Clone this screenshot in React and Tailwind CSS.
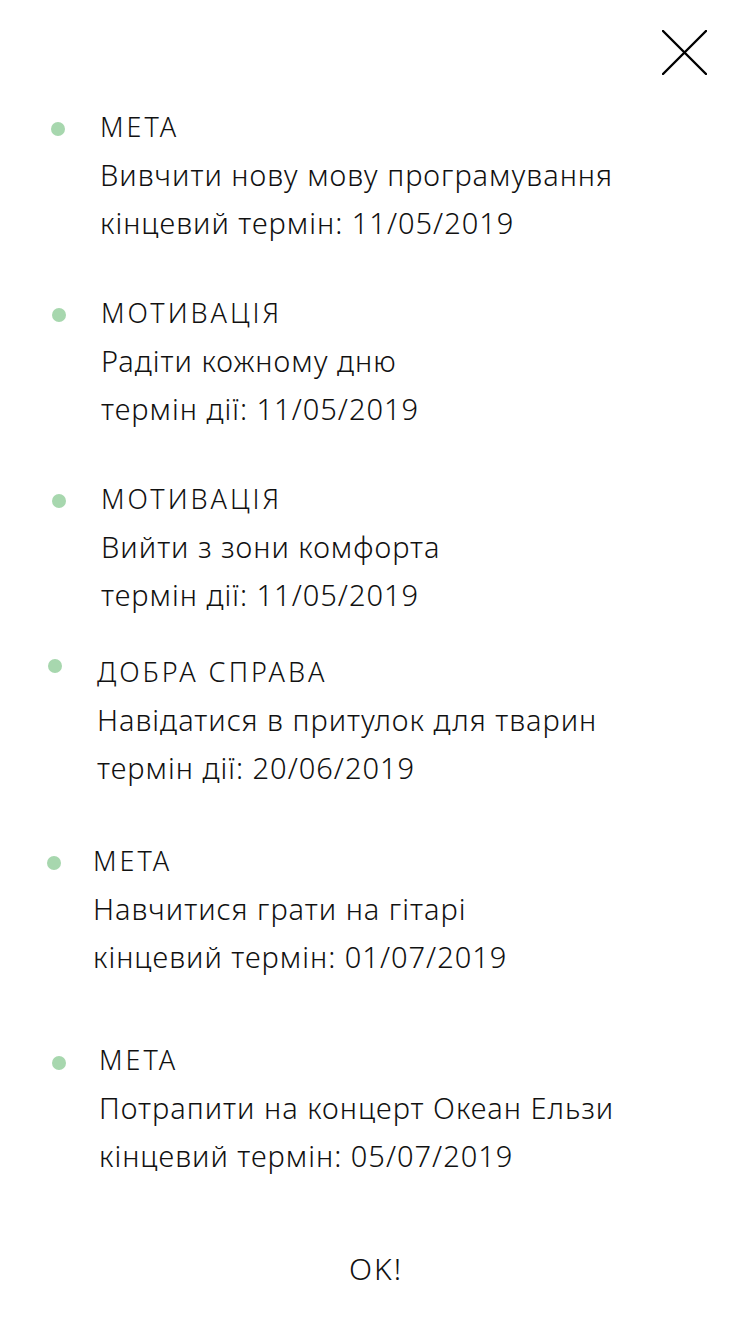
const goals = [
  {
    title: "МЕТА",
    text: "Вивчити нову мову програмування",
    date: "кінцевий термін: 11/05/2019",
    wrap: "mt-[28px] pl-[51px]",
    dot: "mt-[19px]",
    gap: "ml-[35px]",
  },
  {
    title: "МОТИВАЦІЯ",
    text: "Радіти кожному дню",
    date: "термін дії: 11/05/2019",
    wrap: "mt-[42px] pl-[52px]",
    dot: "mt-[19px]",
    gap: "ml-[35px]",
  },
  {
    title: "МОТИВАЦІЯ",
    text: "Вийти з зони комфорта",
    date: "термін дії: 11/05/2019",
    wrap: "mt-[42px] pl-[52px]",
    dot: "mt-[19px]",
    gap: "ml-[35px]",
  },
  {
    title: "ДОБРА СПРАВА",
    text: "Навідатися в притулок для тварин",
    date: "термін дії: 20/06/2019",
    wrap: "mt-[29px] pl-[48px]",
    dot: "mt-[11px]",
    gap: "ml-[35px]",
  },
  {
    title: "МЕТА",
    text: "Навчитися грати на гітарі",
    date: "кінцевий термін: 01/07/2019",
    wrap: "mt-[45px] pl-[47px]",
    dot: "mt-[19px]",
    gap: "ml-[32px]",
  },
  {
    title: "МЕТА",
    text: "Потрапити на концерт Океан Ельзи",
    date: "кінцевий термін: 05/07/2019",
    wrap: "mt-[55px] pl-[52px]",
    dot: "mt-[20px]",
    gap: "ml-[33px]",
  },
];

function CloseIcon() {
  return (
    <svg width="45" height="45" viewBox="0 0 45 45" fill="none">
      <path
        d="M1 1L44 44M44 1L1 44"
        stroke="#000"
        strokeWidth="2.4"
        strokeLinecap="round"
      />
    </svg>
  );
}

export default function App() {
  return (
    <div className="min-h-[1330px] w-[750px] bg-white text-[#111] font-['Noto_Sans',sans-serif] font-light">
      <div className="flex justify-end pt-[30px] pr-[43px]">
        <button className="block">
          <CloseIcon />
        </button>
      </div>

      <div className="flex flex-col">
        {goals.map((goal, i) => (
          <div key={i} className={`flex items-start ${goal.wrap}`}>
            <span
              className={`block w-[14px] h-[14px] rounded-full bg-[#a7d7ae] shrink-0 ${goal.dot}`}
            />
            <div className={`flex flex-col leading-[48px] ${goal.gap}`}>
              <span className="text-[27px] tracking-[3px]">{goal.title}</span>
              <span className="text-[29px] tracking-[1px]">{goal.text}</span>
              <span className="text-[29px] tracking-[1px]">{goal.date}</span>
            </div>
          </div>
        ))}
      </div>

      <div className="flex justify-center mt-[65px]">
        <button className="text-[30px] leading-[48px] tracking-[2px] pl-[2px]">OK!</button>
      </div>
    </div>
  );
}
